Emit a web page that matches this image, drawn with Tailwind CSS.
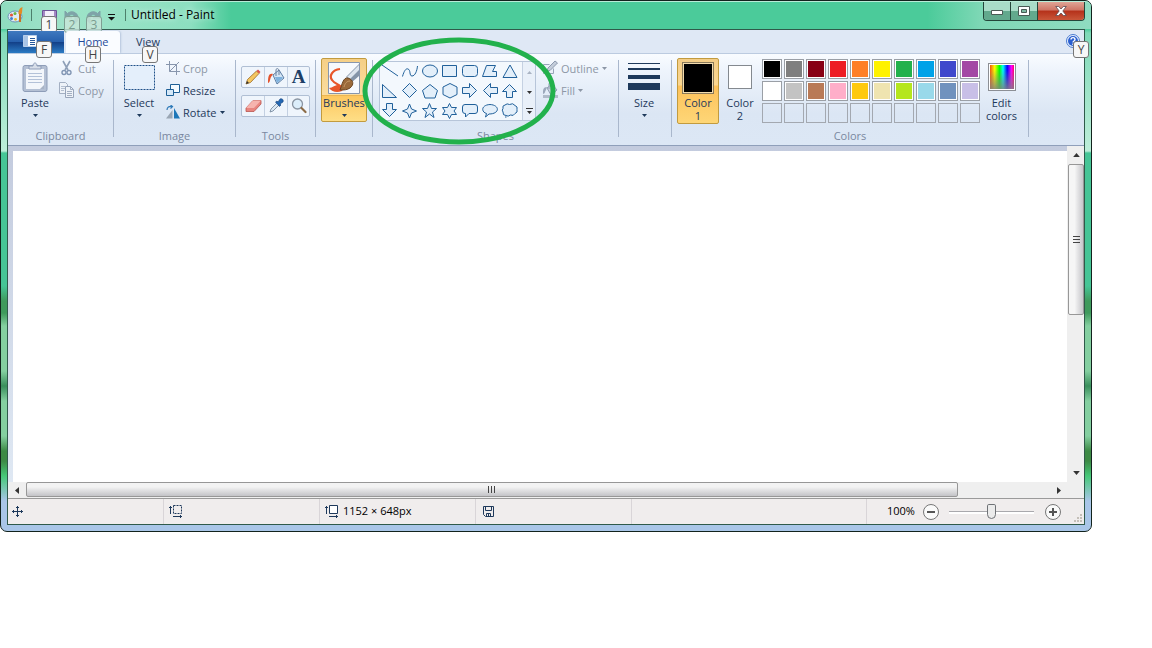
<!DOCTYPE html>
<html lang="en">
<head>
  <meta charset="UTF-8">
  <meta name="viewport" content="width=device-width, initial-scale=1.0">
  <title>Untitled - Paint</title>
  <script src="https://cdn.jsdelivr.net/npm/@tailwindcss/browser@4"></script>
</head>
<body class="bg-white font-['Open_Sans','Noto_Sans',sans-serif] text-[11px] text-[#1e395b]">

  <svg class="hidden">
    <symbol id="caret" viewBox="0 0 5 3"><path d="M0 0h5L2.5 3z" fill="currentColor"/></symbol>
  </svg>

  <!-- Window frame -->
  <div class="mr-[60px] rounded-[7px] border border-[#12231d] bg-[linear-gradient(180deg,#4bcb9a_0px,#4bcb9a_28px,#7fd9b8_32px,#bdeed9_150px,#46c596_152px,#46c596_285px,#3f9a5c_300px,#3f9a5c_312px,#84cfa0_325px,#84cfa0_370px,#3a8f5c_385px,#84cfa0_400px,#84cfa0_435px,#3d8a45_450px,#3d8a45_460px,#46c878_475px,#a9c6e8_500px)] px-[6px] pb-[6px]">

    <!-- Title bar -->
    <header class="-mx-[6px] flex h-[28px] items-start rounded-t-[6px] border-t border-[#b8ecd8] bg-[linear-gradient(90deg,#8fdcbf_0px,#9fe3c9_60px,#8cdfc0_190px,#4bcb9a_230px,#4bcb9a_85%,#7fd8b6_90%,#8fdcc0_100%)] pl-[6px] text-black">
      <svg class="mt-[5px] h-4 w-[18px]" viewBox="0 0 18 16">
        <ellipse cx="8" cy="9.500" rx="7" ry="5.500" fill="#dcebf7" stroke="#6d93b5"/>
        <circle cx="4.500" cy="8" r="1.600" fill="#e2553b"/><circle cx="8" cy="6.500" r="1.500" fill="#6cb33f"/>
        <circle cx="4.500" cy="11.500" r="1.500" fill="#3f7fd0"/><circle cx="8.500" cy="12.300" r="1.400" fill="#e7b62c"/>
        <path d="M13 15V7" stroke="#c87024" stroke-width="2"/><path d="M11.500 7c0-4 1-6 4-7-.5 3 0 5-1 7z" fill="#e58a24"/>
      </svg>
      <div class="mt-[7px] ml-[6px] h-3 w-px bg-[#4c7f6b]"></div>
      <div class="relative mt-[8px] ml-[10px] flex gap-[7px]">
        <button class="relative h-[15px] w-[15px]" aria-label="Save">
          <svg class="h-[15px] w-[15px]" viewBox="0 0 15 15"><path d="M.5.5h14v14H.5z" fill="#a487c4" stroke="#6c5496"/><path d="M3 1h9v5H3z" fill="#f3eefa"/></svg>
          <span class="absolute top-[6px] -left-px flex h-[17px] w-[16px] items-center justify-center rounded-[3px] border border-[#767676] bg-[#f7f7f7] text-[12px] text-[#444]">1</span>
        </button>
        <button class="relative h-[15px] w-[15px]" aria-label="Undo" disabled>
          <svg class="h-[15px] w-[15px]" viewBox="0 0 15 15"><path d="M1 1v7h7L5.500 5.500C8 3.500 11 5 11 9c0 3-1 4-2 5 4-1 5-4 5-6 0-6-7-8-10.500-4.500z" fill="#7fa3a8" stroke="#7fa3a8"/></svg>
          <span class="absolute top-[6px] left-0 flex h-[17px] w-[16px] items-center justify-center rounded-[3px] border border-[#7f9f93] bg-[#c9e6da]/80 text-[12px] text-[#7a9c90]">2</span>
        </button>
        <button class="relative h-[15px] w-[15px]" aria-label="Redo" disabled>
          <svg class="h-[15px] w-[15px]" viewBox="0 0 15 15"><path d="M14 1v7H7l2.500-2.500C7 3.500 4 5 4 9c0 3 1 4 2 5-4-1-5-4-5-6 0-6 7-8 10.500-4.500z" fill="#7fa3a8" stroke="#7fa3a8"/></svg>
          <span class="absolute top-[6px] left-0 flex h-[17px] w-[16px] items-center justify-center rounded-[3px] border border-[#7f9f93] bg-[#c9e6da]/80 text-[12px] text-[#7a9c90]">3</span>
        </button>
      </div>
      <button class="mt-[12px] ml-[7px] h-[7px] w-[7px]" aria-label="Customize Quick Access Toolbar">
        <svg class="block h-[7px] w-[7px]" viewBox="0 0 7 7"><path d="M0 0h7v1H0zM0 3h7L3.500 6.500z" fill="#111"/></svg>
      </button>
      <div class="mt-[7px] ml-[10px] h-3 w-px bg-[#4c7f6b]"></div>
      <h1 class="mt-[5px] ml-[5px] text-[12px] leading-4 [text-shadow:0_0_6px_#e5fff5]">Untitled - Paint</h1>
      <div class="mr-[6px] ml-auto flex h-[19px] overflow-hidden rounded-b-[4px] border border-t-0 border-[#24463a]">
        <button class="flex w-[27px] items-center justify-center border-r border-[#24463a] bg-linear-to-b from-[#a9dcc8] from-50% to-[#62a98d] to-50% pt-[3px]" aria-label="Minimize">
          <svg class="h-[5px] w-3" viewBox="0 0 12 5"><path d="M.5.5h11v4H.5z" fill="#fff" stroke="#4a5a55"/></svg>
        </button>
        <button class="flex w-[27px] items-center justify-center border-r border-[#24463a] bg-linear-to-b from-[#a9dcc8] from-50% to-[#62a98d] to-50%" aria-label="Maximize">
          <svg class="h-[10px] w-3" viewBox="0 0 12 10"><path d="M.5.5h11v9H.5z" fill="#fff" stroke="#4a5a55"/><path d="M3.500 3.500h5v3h-5z" fill="#7db8a2" stroke="#4a5a55"/></svg>
        </button>
        <button class="flex w-[46px] items-center justify-center bg-[linear-gradient(180deg,#e0a596_0%,#cf7565_45%,#b5311a_50%,#c9573a_100%)]" aria-label="Close">
          <svg class="h-[10px] w-3" viewBox="0 0 12 10"><path d="M.7.500h3L6 3 8.300.500h3L7.800 5l3.500 4.500h-3L6 7 3.700 9.500h-3L4.200 5z" fill="#fff" stroke="#5a4a50" stroke-width=".8"/></svg>
        </button>
      </div>
    </header>

    <div class="border border-[#2f5a4a] bg-[#f0eded]">
      <!-- Tabs -->
      <nav class="flex h-[23px] items-end bg-[#dfe8f5] text-[#1e395b]">
        <button class="relative flex h-[22px] w-[56px] items-center justify-center bg-[linear-gradient(180deg,#3f79bf_0%,#2760ad_48%,#123f87_50%,#2b7bc4_100%)]" aria-label="Paint menu">
          <svg class="mr-[12px] mb-[2px] h-3 w-[14px]" viewBox="0 0 14 12"><path d="M.5.5h13v11H.5z" fill="#fff" stroke="#b7cdea"/><path d="M1 1h4v10H1z" fill="#a9c4e6"/><path d="M7 3.500h5M7 5.500h5M7 7.500h5M7 9.500h5" stroke="#27589b"/></svg>
          <span class="absolute top-[10px] left-[28px] z-10 flex h-[17px] w-[16px] items-center justify-center rounded-[3px] border border-[#767676] bg-[#f7f7f7] text-[12px] text-[#444]">F</span>
        </button>
        <button class="relative ml-[2px] h-[22px] w-[54px] rounded-t-[3px] bg-[#fafcff] text-[#1f4a9a] shadow-[1px_0_2px_#b5c5dc]">Home
          <span class="absolute top-[15px] left-[19px] z-10 flex h-[17px] w-[16px] items-center justify-center rounded-[3px] border border-[#767676] bg-[#f7f7f7] text-[12px] text-[#444]">H</span>
        </button>
        <button class="relative h-[22px] w-[56px]">View
          <span class="absolute top-[15px] left-[22px] z-10 flex h-[17px] w-[16px] items-center justify-center rounded-[3px] border border-[#767676] bg-[#f7f7f7] text-[12px] text-[#444]">V</span>
        </button>
        <button class="relative mr-[4px] mb-[5px] ml-auto h-[14px] w-[14px]" aria-label="Help">
          <svg class="h-[14px] w-[14px]" viewBox="0 0 14 14"><circle cx="7" cy="7" r="6.500" fill="#e7f0fc" stroke="#4a7bd0"/><circle cx="7" cy="7" r="5" fill="#2a5fd0"/><path d="M5 5.500c0-2.500 4-2.500 4 0C9 7 7 7 7 8.500M7 9.500v1.500" fill="none" stroke="#fff" stroke-width="1.400"/></svg>
          <span class="absolute top-[7px] left-[7px] z-10 flex h-[17px] w-[16px] items-center justify-center rounded-[3px] border border-[#767676] bg-[#f7f7f7] text-[12px] text-[#444]">Y</span>
        </button>
      </nav>

      <!-- Ribbon -->
      <div class="flex h-[93px] items-start border-t border-b border-t-[#bccbe0] border-b-[#8f9fba] bg-[linear-gradient(180deg,#f9fcff_0%,#eef4fc_18%,#dbe6f4_65%,#dce7f5_100%)] pt-[4px] leading-[13px]">

        <section class="w-[105px] shrink-0">
          <div class="flex h-[70px] pl-[4px]">
            <button class="flex h-[66px] w-[46px] flex-col items-center">
              <span class="flex h-[38px] items-center">
                <svg class="h-[30px] w-[26px]" viewBox="0 0 26 30"><rect x="1" y="3.500" width="24" height="26" rx="2" fill="#b4c0d4" stroke="#8e9db8"/><path d="M4 7h18v20H4z" fill="#f3f6fb"/><path d="M6 11.500h14M6 14.500h14M6 17.500h14M6 20.500h14" stroke="#b3c1d8"/><path d="M18 27l4-4v4z" fill="#a9b4c6"/><path d="M7 7V4h4c0-4 4-4 4 0h4v3z" fill="#d7dee9" stroke="#8e9db8"/></svg>
              </span>
              Paste
              <svg class="mt-[5px] h-[3px] w-[5px]"><use href="#caret"/></svg>
            </button>
            <div class="flex h-[65px] flex-col text-[#8d97a6]">
              <button class="flex h-[22px] items-center gap-[3px] pb-[2px]" disabled>
                <svg class="h-4 w-[17px]" viewBox="0 0 17 16"><path d="M5 1l5 9M12 1l-5 9" stroke="#8fa0b8" stroke-width="1.600"/><circle cx="6" cy="12.500" r="2" fill="none" stroke="#8296b4" stroke-width="1.400"/><circle cx="11" cy="12.500" r="2" fill="none" stroke="#8296b4" stroke-width="1.400"/></svg>
                Cut
              </button>
              <button class="flex h-[22px] items-center gap-[3px] pb-[2px]" disabled>
                <svg class="h-4 w-[17px]" viewBox="0 0 17 16"><path d="M1.500.5h6l2 2v9h-8z" fill="#eef2f8" stroke="#a3afc2"/><path d="M3 4.500h4M3 6.500h4M3 8.500h3" stroke="#b4bfd0"/><path d="M7.500 4.500h5l3 3v8h-8z" fill="#eef2f8" stroke="#98a5ba"/><path d="M12.500 4.500v3h3M9 9.500h5M9 11.500h5M9 13.500h5" fill="none" stroke="#a3afc2"/></svg>
                Copy
              </button>
            </div>
          </div>
          <h2 class="text-center leading-4 text-[#7a88a0]">Clipboard</h2>
        </section>
        <div class="mt-[2px] h-[77px] w-px shrink-0 bg-[#a9b7cc]"></div>

        <section class="w-[121px] shrink-0">
          <div class="flex h-[70px] pl-[2px]">
            <button class="flex h-[66px] w-[46px] flex-col items-center">
              <span class="flex h-[38px] items-center">
                <svg class="h-[25px] w-[31px]" viewBox="0 0 31 25"><path d="M.5.5h30v24H.5z" fill="#e4effb" stroke="#1e5088" stroke-dasharray="2 1"/></svg>
              </span>
              Select
              <svg class="mt-[5px] h-[3px] w-[5px]"><use href="#caret"/></svg>
            </button>
            <div class="ml-[4px] flex flex-col">
              <button class="flex h-[22px] items-center gap-[3px] pb-[2px] text-[#8d97a6]" disabled>
                <svg class="h-[14px] w-[14px]" viewBox="0 0 14 14"><path d="M0 3.500h10.500V14M3.500 0v10.500H14M3.500 10.500L13 1" fill="none" stroke="#8896ad"/></svg>
                Crop
              </button>
              <button class="flex h-[22px] items-center gap-[3px] pb-[2px]">
                <svg class="h-[14px] w-[14px]" viewBox="0 0 14 14"><path d="M4.500 1.500h9v8h-9z" fill="#f4faff" stroke="#1e5f96"/><path d="M.5 6.500h7v6h-7z" fill="#d5e8f8" stroke="#1e5f96"/></svg>
                Resize
              </button>
              <button class="flex h-[22px] items-center gap-[3px] pb-[2px]">
                <svg class="h-[14px] w-[14px]" viewBox="0 0 14 14"><path d="M6.500 5v8.500H0z" fill="#9aa6b4"/><path d="M8 3v10.500h6z" fill="#1c76b8"/><path d="M1 5c0-3 2-4 5-3.500M4.500 0l2 1.500-2 2" fill="none" stroke="#2f7ab8" stroke-width="1.200"/></svg>
                Rotate
                <svg class="h-[3px] w-[5px]"><use href="#caret"/></svg>
              </button>
            </div>
          </div>
          <h2 class="text-center leading-4 text-[#7a88a0]">Image</h2>
        </section>
        <div class="mt-[2px] h-[77px] w-px shrink-0 bg-[#a9b7cc]"></div>

        <section class="w-[79px] shrink-0">
          <div class="flex h-[70px] flex-col items-center gap-[7px] pt-[8px]">
            <div class="flex h-[22px] divide-x divide-[#c3d0e2] rounded-[2px] border border-[#b0bfd4] bg-[#eff5fc]">
              <button class="flex w-[23px] items-center justify-center" aria-label="Pencil">
                <svg class="h-4 w-4" viewBox="0 0 16 16"><path d="M1 15l1.500-4.500L11.500 2l2.500 2.500L5.500 13.500z" fill="#f5c761" stroke="#9a6a25" stroke-width=".8"/><path d="M11.500 2L13 .5 15.500 3 14 4.500z" fill="#d9534a"/><path d="M1 15l1-3 2 2z" fill="#333"/></svg>
              </button>
              <button class="flex w-[23px] items-center justify-center" aria-label="Fill with color">
                <svg class="h-[18px] w-[18px]" viewBox="0 0 18 18"><path d="M6 7l6-5 5 8-7 6z" fill="#d4e5f4" stroke="#5c7da3"/><path d="M9 8V2c0-2 3-2 3 1v4" fill="none" stroke="#6c829f"/><path d="M8 9l7 0 1 1-6 5z" fill="#7fb2de"/><path d="M6 6C2 5 1 8 1 15c2 0 2-4 3-6z" fill="#e2532d"/></svg>
              </button>
              <button class="flex w-[21px] items-center justify-center" aria-label="Text">
                <span class="font-['Liberation_Serif',serif] text-[19px] leading-[20px] font-bold text-[#1d3f66]">A</span>
              </button>
            </div>
            <div class="flex h-[22px] divide-x divide-[#c3d0e2] rounded-[2px] border border-[#b0bfd4] bg-[#eff5fc]">
              <button class="flex w-[23px] items-center justify-center" aria-label="Eraser">
                <svg class="h-4 w-[17px]" viewBox="0 0 17 16"><path d="M1 10L8 2.500l8 0V6L9 13.500H1z" fill="#e8857f" stroke="#b9564f" stroke-width=".8"/><path d="M1 10L8 2.500h8L9 10z" fill="#f6b4ae"/></svg>
              </button>
              <button class="flex w-[23px] items-center justify-center" aria-label="Color picker">
                <svg class="h-4 w-4" viewBox="0 0 16 16"><path d="M2 14l1-3 6-6 2 2-6 6z" fill="#dbe9f5" stroke="#6d8097" stroke-width=".8"/><path d="M7.500 4l1.500-1 1 1 2-3c2-1 4 1 3 3l-3 2 1 1-1.500 1.500z" fill="#2368b4" stroke="#153f77" stroke-width=".6"/></svg>
              </button>
              <button class="flex w-[21px] items-center justify-center" aria-label="Magnifier">
                <svg class="h-4 w-4" viewBox="0 0 16 16"><circle cx="6.500" cy="6" r="5" fill="#dceefb" stroke="#8a95a3" stroke-width="1.300"/><path d="M10.500 10l4 4" stroke="#8c6c48" stroke-width="2.200" stroke-linecap="round"/></svg>
              </button>
            </div>
          </div>
          <h2 class="text-center leading-4 text-[#7a88a0]">Tools</h2>
        </section>
        <div class="mt-[2px] h-[77px] w-px shrink-0 bg-[#a9b7cc]"></div>

        <section class="flex w-[56px] shrink-0 justify-center">
          <button class="flex h-[64px] w-[46px] flex-col items-center rounded-[2px] border border-[#c29b3f] bg-[linear-gradient(180deg,#f5cf86_0px,#fbdd9f_36px,#d9a648_36px,#fdc75f_37px,#fee08a_64px)]">
            <span class="flex h-[37px] items-center">
              <svg class="h-8 w-8" viewBox="0 0 32 32"><path d="M.5.5h31v31H.5z" fill="#f6f9fd" stroke="#8796ad"/><path d="M12 7C4 8 1 14 4 18c2 3 6 4 8 6" fill="none" stroke="#e8562a" stroke-width="2.200"/><path d="M1 26c4 0 7-4 11-3 3 0 4 4 2 6-5 2-10 1-13-3z" fill="#e8562a"/><path d="M31 2v12l-7 6-6-5z" fill="#8494a8"/><path d="M31 3L19 15l3 2 9-9z" fill="#dde5ee"/><path d="M12 28c2-5 3-13 8-12 6 2 6 7 2 10-3 2-6 2-10 2z" fill="#9b6a3a" stroke="#6c4520"/><path d="M16 25c1-4 3-6 6-6" fill="none" stroke="#c79a66"/></svg>
            </span>
            Brushes
            <svg class="mt-[5px] h-[3px] w-[5px]"><use href="#caret"/></svg>
          </button>
        </section>
        <div class="mt-[2px] h-[77px] w-px shrink-0 bg-[#a9b7cc]"></div>

        <section class="relative w-[245px] shrink-0">
          <div class="flex h-[70px] pl-[6px]">
            <div class="mt-[3px] flex h-[60px] w-[157px] border border-[#b7c5d9] bg-[#f3f8fd] text-[#20609a]">
              <div class="-mt-px grid grid-cols-7">
                <button class="h-[20px] w-[20px]" aria-label="Line"><svg class="h-5 w-5 fill-none stroke-current" viewBox="0 0 20 20"><path d="M2 4l16 11"/></svg></button>
                <button class="h-[20px] w-[20px]" aria-label="Curve"><svg class="h-5 w-5 fill-none stroke-current" viewBox="0 0 20 20"><path d="M2.500 15.500C4 10 6 7 8 8c3 1 1 7 4 7 3 0 5-5 5.500-10"/></svg></button>
                <button class="h-[20px] w-[20px]" aria-label="Oval"><svg class="h-5 w-5 fill-[#e3effa] stroke-current" viewBox="0 0 20 20"><ellipse cx="10" cy="10" rx="7.500" ry="6"/></svg></button>
                <button class="h-[20px] w-[20px]" aria-label="Rectangle"><svg class="h-5 w-5 fill-[#e3effa] stroke-current" viewBox="0 0 20 20"><path d="M2.500 4.500h14v11h-14z"/></svg></button>
                <button class="h-[20px] w-[20px]" aria-label="Rounded rectangle"><svg class="h-5 w-5 fill-[#e3effa] stroke-current" viewBox="0 0 20 20"><rect x="2.500" y="4.500" width="15" height="11" rx="3"/></svg></button>
                <button class="h-[20px] w-[20px]" aria-label="Polygon"><svg class="h-5 w-5 fill-[#e3effa] stroke-current" viewBox="0 0 20 20"><path d="M6.500 4.500h9l-3 6h4v5h-14z"/></svg></button>
                <button class="h-[20px] w-[20px]" aria-label="Triangle"><svg class="h-5 w-5 fill-[#e3effa] stroke-current" viewBox="0 0 20 20"><path d="M10 4l7 12.500H3z"/></svg></button>
                <button class="h-[20px] w-[20px]" aria-label="Right triangle"><svg class="h-5 w-5 fill-[#e3effa] stroke-current" viewBox="0 0 20 20"><path d="M2.500 3.500l14 13h-14z"/></svg></button>
                <button class="h-[20px] w-[20px]" aria-label="Diamond"><svg class="h-5 w-5 fill-[#e3effa] stroke-current" viewBox="0 0 20 20"><path d="M9.500 2.500l7 7-7 7-7-7z"/></svg></button>
                <button class="h-[20px] w-[20px]" aria-label="Pentagon"><svg class="h-5 w-5 fill-[#e3effa] stroke-current" viewBox="0 0 20 20"><path d="M10 3.500l7.500 6L15 17H5L2.500 9.500z"/></svg></button>
                <button class="h-[20px] w-[20px]" aria-label="Hexagon"><svg class="h-5 w-5 fill-[#e3effa] stroke-current" viewBox="0 0 20 20"><path d="M10 2.500l7 3.500v7.500l-7 3.500-7-3.500V6z"/></svg></button>
                <button class="h-[20px] w-[20px]" aria-label="Right arrow"><svg class="h-5 w-5 fill-[#e3effa] stroke-current" viewBox="0 0 20 20"><path d="M2.500 6.500h7v-4l7 7-7 7v-4h-7z"/></svg></button>
                <button class="h-[20px] w-[20px]" aria-label="Left arrow"><svg class="h-5 w-5 fill-[#e3effa] stroke-current" viewBox="0 0 20 20"><path d="M17.500 6.500h-7v-4l-7 7 7 7v-4h7z"/></svg></button>
                <button class="h-[20px] w-[20px]" aria-label="Up arrow"><svg class="h-5 w-5 fill-[#e3effa] stroke-current" viewBox="0 0 20 20"><path d="M6.500 16.500v-6h-4l7-7 7 7h-4v6z"/></svg></button>
                <button class="h-[20px] w-[20px]" aria-label="Down arrow"><svg class="h-5 w-5 fill-[#e3effa] stroke-current" viewBox="0 0 20 20"><path d="M6.500 2.500v6h-4l7 7 7-7h-4v-6z"/></svg></button>
                <button class="h-[20px] w-[20px]" aria-label="Four-point star"><svg class="h-5 w-5 fill-[#e3effa] stroke-current" viewBox="0 0 20 20"><path d="M9.500 3l2 5 5 2-5 2-2 5-2-5-5-2 5-2z"/></svg></button>
                <button class="h-[20px] w-[20px]" aria-label="Five-point star"><svg class="h-5 w-5 fill-[#e3effa] stroke-current" viewBox="0 0 20 20"><path d="M9.500 2.500l2 5h5l-4 3.500 1.500 5.500-4.500-3.500L5 16.500 6.500 11l-4-3.500h5z"/></svg></button>
                <button class="h-[20px] w-[20px]" aria-label="Six-point star"><svg class="h-5 w-5 fill-[#e3effa] stroke-current" viewBox="0 0 20 20"><path d="M9.500 2.500l2 4h5l-2.500 3.500 2.500 3.500h-5l-2 4-2-4h-5L5 10 2.500 6.500h5z"/></svg></button>
                <button class="h-[20px] w-[20px]" aria-label="Rounded rectangular callout"><svg class="h-5 w-5 fill-[#e3effa] stroke-current" viewBox="0 0 20 20"><path d="M5 3.500h10q2.500 0 2.500 2.500v4q0 2.500-2.500 2.500H9L5.500 16v-3.500H5Q2.500 12.500 2.500 10V6Q2.500 3.500 5 3.500z"/></svg></button>
                <button class="h-[20px] w-[20px]" aria-label="Oval callout"><svg class="h-5 w-5 fill-[#e3effa] stroke-current" viewBox="0 0 20 20"><path d="M5.500 16l1-3.500C1 11 1 4 10 3.500c10 .5 10 9.500-1 9.500z"/></svg></button>
                <button class="h-[20px] w-[20px]" aria-label="Cloud callout"><svg class="h-5 w-5 fill-[#e3effa] stroke-current" viewBox="0 0 20 20"><path d="M5 4q2-2 4.500-.5Q13 1.500 15 4.500q3 1 2 4 1 3-2 4-1.500 3-4.500 1.500Q8 16 6 14.500q-3.500 0-3-3.500-1.500-2 0-3.500Q2 4.500 5 4zM5 16h1.500"/></svg></button>
              </div>
              <div class="ml-auto flex w-[13px] flex-col border-l border-[#c5d1e2] bg-[#e9f0f9]">
                <button class="flex h-[20px] items-center justify-center text-[#a9b3c2]" aria-label="Row up"><svg class="h-[3px] w-[5px] rotate-180"><use href="#caret"/></svg></button>
                <button class="flex h-[20px] items-center justify-center text-[#333]" aria-label="Row down"><svg class="h-[3px] w-[5px]"><use href="#caret"/></svg></button>
                <button class="flex h-[18px] items-center justify-center" aria-label="More shapes"><svg class="h-[6px] w-[7px]" viewBox="0 0 7 6"><path d="M0 0h7v1H0zM1 3h5L3.500 6z" fill="#333"/></svg></button>
              </div>
            </div>
            <div class="ml-[6px] flex flex-col text-[#8d97a6]">
              <button class="flex h-[22px] items-center gap-[3px] pb-[2px]" disabled>
                <svg class="h-4 w-4" viewBox="0 0 16 16"><path d="M11.500 8.500v5h-10v-9h6" fill="#eaf0f8" stroke="#98a5b9"/><path d="M5 11l1-3 7-7 2.500 2-7.500 7.500z" fill="#c3ccd9" stroke="#8c99ae"/></svg>
                Outline
                <svg class="h-[3px] w-[5px]"><use href="#caret"/></svg>
              </button>
              <button class="flex h-[22px] items-center gap-[3px] pb-[2px]" disabled>
                <svg class="h-4 w-4" viewBox="0 0 16 16"><path d="M5 6l5-4 5 6-6 5z" fill="#cbd4e1" stroke="#8f9db2"/><path d="M7 7V2c0-2 3-2 3 1" fill="none" stroke="#8f9db2"/><path d="M5 5C1 5 1 8 1 12c2 0 2-3 3-4z" fill="#9ba8bb"/><path d="M1 13h15v3H1z" fill="#b0bbca"/></svg>
                Fill
                <svg class="h-[3px] w-[5px]"><use href="#caret"/></svg>
              </button>
            </div>
          </div>
          <h2 class="text-center leading-4 text-[#7a88a0]">Shapes</h2>
          <!-- Highlight ring over the shapes gallery -->
          <svg class="pointer-events-none absolute -top-[21px] -left-[12px] z-20 h-[108px] w-[196px] max-w-none" viewBox="0 0 196 108"><ellipse cx="98" cy="54" rx="94" ry="51" fill="none" stroke="#22b14c" stroke-width="5"/></svg>
        </section>
        <div class="mt-[2px] h-[77px] w-px shrink-0 bg-[#a9b7cc]"></div>

        <section class="flex w-[52px] shrink-0 justify-center">
          <button class="flex h-[66px] w-[48px] flex-col items-center pr-[2px]">
            <span class="flex h-[38px] items-center">
              <svg class="h-7 w-8" viewBox="0 0 32 28"><path d="M0 0h32v1H0zM0 5h32v2H0zM0 12h32v4H0zM0 20h32v7H0z" fill="#1e395b"/></svg>
            </span>
            Size
            <svg class="mt-[5px] h-[3px] w-[5px]"><use href="#caret"/></svg>
          </button>
        </section>
        <div class="mt-[2px] h-[77px] w-px shrink-0 bg-[#a9b7cc]"></div>

        <section class="w-[356px] shrink-0">
          <div class="flex h-[70px] pl-[5px]">
            <button class="flex h-[66px] w-[42px] flex-col items-center rounded-[2px] border border-[#c29b3f] bg-[linear-gradient(180deg,#f3cd87_0px,#fbd791_26px,#fdc15a_27px,#fed778_65px)]">
              <span class="flex h-[37px] items-center"><span class="h-8 w-8 border border-[#8a7a5a] bg-black outline-1 -outline-offset-2 outline-[#f3dcae]"></span></span>
              <span class="w-[30px]">Color 1</span>
            </button>
            <button class="flex h-[66px] w-[42px] flex-col items-center">
              <span class="flex h-[38px] items-center"><span class="h-6 w-6 border border-[#84898f] bg-white"></span></span>
              <span class="w-[30px]">Color 2</span>
            </button>
            <div class="mt-px ml-px grid h-[64px] grid-cols-10 gap-[2px]">
              <button class="h-[20px] w-[20px] border border-[#9a9fa6] bg-white p-px" aria-label="Black"><span class="block h-4 w-4 bg-[#000000]"></span></button>
              <button class="h-[20px] w-[20px] border border-[#9a9fa6] bg-white p-px" aria-label="Gray-50%"><span class="block h-4 w-4 bg-[#7f7f7f]"></span></button>
              <button class="h-[20px] w-[20px] border border-[#9a9fa6] bg-white p-px" aria-label="Dark red"><span class="block h-4 w-4 bg-[#880015]"></span></button>
              <button class="h-[20px] w-[20px] border border-[#9a9fa6] bg-white p-px" aria-label="Red"><span class="block h-4 w-4 bg-[#ed1c24]"></span></button>
              <button class="h-[20px] w-[20px] border border-[#9a9fa6] bg-white p-px" aria-label="Orange"><span class="block h-4 w-4 bg-[#ff7f27]"></span></button>
              <button class="h-[20px] w-[20px] border border-[#9a9fa6] bg-white p-px" aria-label="Yellow"><span class="block h-4 w-4 bg-[#fff200]"></span></button>
              <button class="h-[20px] w-[20px] border border-[#9a9fa6] bg-white p-px" aria-label="Green"><span class="block h-4 w-4 bg-[#22b14c]"></span></button>
              <button class="h-[20px] w-[20px] border border-[#9a9fa6] bg-white p-px" aria-label="Turquoise"><span class="block h-4 w-4 bg-[#00a2e8]"></span></button>
              <button class="h-[20px] w-[20px] border border-[#9a9fa6] bg-white p-px" aria-label="Indigo"><span class="block h-4 w-4 bg-[#3f48cc]"></span></button>
              <button class="h-[20px] w-[20px] border border-[#9a9fa6] bg-white p-px" aria-label="Purple"><span class="block h-4 w-4 bg-[#a349a4]"></span></button>
              <button class="h-[20px] w-[20px] border border-[#9a9fa6] bg-white p-px" aria-label="White"><span class="block h-4 w-4 bg-[#ffffff]"></span></button>
              <button class="h-[20px] w-[20px] border border-[#9a9fa6] bg-white p-px" aria-label="Gray-25%"><span class="block h-4 w-4 bg-[#c3c3c3]"></span></button>
              <button class="h-[20px] w-[20px] border border-[#9a9fa6] bg-white p-px" aria-label="Brown"><span class="block h-4 w-4 bg-[#b97a57]"></span></button>
              <button class="h-[20px] w-[20px] border border-[#9a9fa6] bg-white p-px" aria-label="Rose"><span class="block h-4 w-4 bg-[#ffaec9]"></span></button>
              <button class="h-[20px] w-[20px] border border-[#9a9fa6] bg-white p-px" aria-label="Gold"><span class="block h-4 w-4 bg-[#ffc90e]"></span></button>
              <button class="h-[20px] w-[20px] border border-[#9a9fa6] bg-white p-px" aria-label="Light yellow"><span class="block h-4 w-4 bg-[#efe4b0]"></span></button>
              <button class="h-[20px] w-[20px] border border-[#9a9fa6] bg-white p-px" aria-label="Lime"><span class="block h-4 w-4 bg-[#b5e61d]"></span></button>
              <button class="h-[20px] w-[20px] border border-[#9a9fa6] bg-white p-px" aria-label="Light turquoise"><span class="block h-4 w-4 bg-[#99d9ea]"></span></button>
              <button class="h-[20px] w-[20px] border border-[#9a9fa6] bg-white p-px" aria-label="Blue-gray"><span class="block h-4 w-4 bg-[#7092be]"></span></button>
              <button class="h-[20px] w-[20px] border border-[#9a9fa6] bg-white p-px" aria-label="Lavender"><span class="block h-4 w-4 bg-[#c8bfe7]"></span></button>
              <button class="h-[20px] w-[20px] border border-[#a3a8b0]" aria-label="Custom 1"></button>
              <button class="h-[20px] w-[20px] border border-[#a3a8b0]" aria-label="Custom 2"></button>
              <button class="h-[20px] w-[20px] border border-[#a3a8b0]" aria-label="Custom 3"></button>
              <button class="h-[20px] w-[20px] border border-[#a3a8b0]" aria-label="Custom 4"></button>
              <button class="h-[20px] w-[20px] border border-[#a3a8b0]" aria-label="Custom 5"></button>
              <button class="h-[20px] w-[20px] border border-[#a3a8b0]" aria-label="Custom 6"></button>
              <button class="h-[20px] w-[20px] border border-[#a3a8b0]" aria-label="Custom 7"></button>
              <button class="h-[20px] w-[20px] border border-[#a3a8b0]" aria-label="Custom 8"></button>
              <button class="h-[20px] w-[20px] border border-[#a3a8b0]" aria-label="Custom 9"></button>
              <button class="h-[20px] w-[20px] border border-[#a3a8b0]" aria-label="Custom 10"></button>
            </div>
            <button class="flex h-[66px] w-[43px] flex-col items-center">
              <span class="flex h-[38px] items-center"><span class="h-7 w-7 border border-[#8c8f95] bg-[linear-gradient(180deg,transparent_20%,#808080_110%),linear-gradient(90deg,#f03010,#ff0_22%,#0f0_40%,#0ff_54%,#00f_70%,#f0f_86%,#f03)] outline-1 -outline-offset-2 outline-white"></span></span>
              <span class="w-[36px]">Edit colors</span>
            </button>
          </div>
          <h2 class="text-center leading-4 text-[#7a88a0]">Colors</h2>
        </section>
        <div class="mt-[2px] h-[77px] w-px shrink-0 bg-[#a9b7cc]"></div>
      </div>

      <!-- Work area -->
      <main class="flex h-[336px]">
        <div class="flex-1 bg-linear-to-b from-[#c3cbde] to-[#dfe8f3] pt-[5px] pl-[5px]">
          <canvas class="block h-full w-full bg-white" aria-label="Drawing"></canvas>
        </div>
        <div class="flex w-[17px] flex-col bg-[#efefef] pl-px" role="scrollbar" aria-label="Vertical">
          <button class="flex h-[18px] items-center justify-center text-[#333]" aria-label="Scroll up"><svg class="h-[4px] w-[7px] rotate-180"><use href="#caret"/></svg></button>
          <div class="flex h-[151px] flex-col items-center justify-center gap-[2px] rounded-[2px] border border-[#979797] bg-linear-to-r from-[#f6f6f6] from-40% to-[#c6c6ca]">
            <span class="h-px w-[7px] bg-[#444]"></span><span class="h-px w-[7px] bg-[#444]"></span><span class="h-px w-[7px] bg-[#444]"></span>
          </div>
          <button class="mt-auto flex h-[19px] items-center justify-center text-[#333]" aria-label="Scroll down"><svg class="h-[4px] w-[7px]"><use href="#caret"/></svg></button>
        </div>
      </main>
      <div class="flex h-[17px] border-b border-[#9a9a9a] bg-[#efefef]">
        <button class="flex w-[18px] items-center justify-center" aria-label="Scroll left"><svg class="h-[7px] w-[4px]" viewBox="0 0 4 7"><path d="M4 0v7L0 3.500z" fill="#333"/></svg></button>
        <div class="flex flex-1" role="scrollbar" aria-label="Horizontal">
          <div class="mb-px flex w-[91%] items-center justify-center gap-[2px] rounded-[2px] border border-[#979797] bg-linear-to-b from-[#f3f3f3] from-30% to-[#c3c3c7]">
            <span class="h-[7px] w-px bg-[#444]"></span><span class="h-[7px] w-px bg-[#444]"></span><span class="h-[7px] w-px bg-[#444]"></span>
          </div>
        </div>
        <button class="mr-[17px] flex w-[17px] items-center justify-center" aria-label="Scroll right"><svg class="h-[7px] w-[4px]" viewBox="0 0 4 7"><path d="M0 0v7l4-3.500z" fill="#333"/></svg></button>
      </div>

      <!-- Status bar -->
      <footer class="flex h-[25px] items-stretch text-black">
        <div class="flex w-[156px] items-center border-r border-[#d9d5d8] pl-[4px]">
          <svg class="h-[11px] w-[11px]" viewBox="0 0 11 11"><path d="M5.500 0v11M0 5.500h11M4 1.500h3M4 9.500h3M1.500 4v3M9.500 4v3" stroke="#1e395b"/></svg>
        </div>
        <div class="flex w-[156px] items-center border-r border-[#d9d5d8] pl-[5px]">
          <svg class="h-[13px] w-[14px]" viewBox="0 0 14 13"><path d="M1.500 9V1M0 2.500h3M4 11.500h9M11.500 10v3" stroke="#1e395b"/><path d="M4.500.5h8v8h-8z" fill="none" stroke="#1e395b" stroke-dasharray="2 1"/></svg>
        </div>
        <div class="flex w-[156px] items-center gap-1 border-r border-[#d9d5d8] pl-[5px]">
          <svg class="h-[13px] w-[14px]" viewBox="0 0 14 13"><path d="M1.500 9V1M0 2.500h3M4 11.500h9M11.500 10v3" stroke="#1e395b"/><path d="M4.500.5h8v8h-8z" fill="#fff" stroke="#1e395b"/></svg>
          1152 × 648px
        </div>
        <div class="flex w-[156px] items-center border-r border-[#d9d5d8] pl-[7px]">
          <svg class="h-[11px] w-[11px]" viewBox="0 0 11 11"><path d="M.5.5h10v10h-8l-2-2zM2.500.5v4h6v-4M3.500 10.500v-3h4v3M5.500 8v2" fill="none" stroke="#1e395b"/></svg>
        </div>
        <div class="flex-1 border-r border-[#d9d5d8]"></div>
        <div class="relative flex w-[217px] items-center pl-[20px]">
          <label for="zoom" class="w-[36px]">100%</label>
          <button class="h-4 w-4" aria-label="Zoom out"><svg class="block h-4 w-4" viewBox="0 0 16 16"><circle cx="8" cy="8" r="7.500" fill="#fafafa" stroke="#777"/><path d="M4 7h8v2H4z" fill="#555"/></svg></button>
          <input id="zoom" type="range" class="mx-[10px] h-4 w-[85px] appearance-none bg-[linear-gradient(180deg,transparent_7px,#a9a9ad_7px,#a9a9ad_8px,#fff_8px,#fff_10px,transparent_10px)] [&::-webkit-slider-thumb]:h-[15px] [&::-webkit-slider-thumb]:w-[9px] [&::-webkit-slider-thumb]:appearance-none [&::-webkit-slider-thumb]:rounded-t-[2px] [&::-webkit-slider-thumb]:rounded-b-[5px] [&::-webkit-slider-thumb]:border [&::-webkit-slider-thumb]:border-[#6f7276] [&::-webkit-slider-thumb]:bg-[#ebebeb]">
          <button class="ml-[1px] h-4 w-4" aria-label="Zoom in"><svg class="block h-4 w-4" viewBox="0 0 16 16"><circle cx="8" cy="8" r="7.500" fill="#fafafa" stroke="#777"/><path d="M4 7h8v2H4zM7 4h2v8H7z" fill="#555"/></svg></button>
          <svg class="mr-[2px] mb-[2px] ml-auto h-2 w-2 self-end" viewBox="0 0 8 8"><path d="M6 0h2v2H6zM3 3h2v2H3zM6 3h2v2H6zM0 6h2v2H0zM3 6h2v2H3zM6 6h2v2H6z" fill="#c4bfb8"/></svg>
        </div>
      </footer>
    </div>
  </div>
</body>
</html>
